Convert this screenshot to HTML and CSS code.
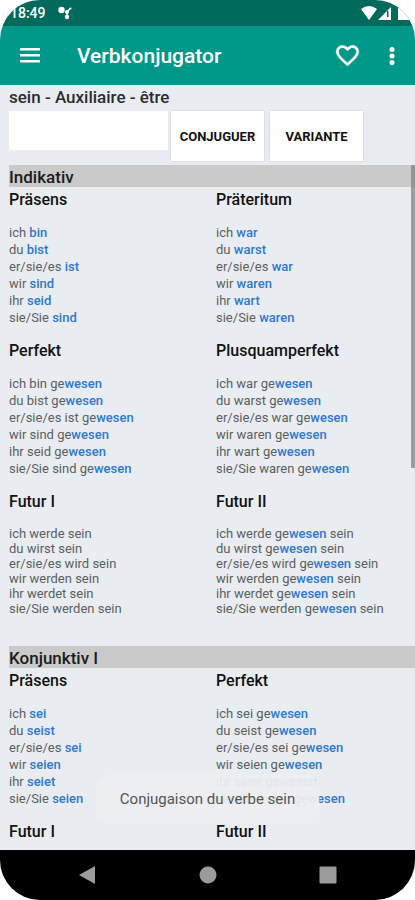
FILE: index.html
```html
<!DOCTYPE html>
<html lang="de">
<head>
    <meta charset="UTF-8">
    <meta name="viewport" content="width=device-width, initial-scale=1.0">
    <title>Verbkonjugator</title>
    <link rel="stylesheet" href="styles.css">
</head>
<body>
<div class="phone">
    <div class="status-bar">
        <span class="time">18:49</span>
        <svg class="notification" width="14" height="14" viewBox="0 0 14 14" fill="#fff">
            <circle cx="3.5" cy="4" r="3.2"/>
            <circle cx="9" cy="6" r="2"/>
            <circle cx="9" cy="11" r="2.2"/>
            <circle cx="12.5" cy="2.5" r="1"/>
            <path d="M8.2 6h1.6v5H8.2zM9 4.5l3-2.5v2l-2 2z"/>
        </svg>
        <svg class="signals" width="54" height="16" viewBox="0 0 54 16">
            <path d="M0 4Q8-2 16 4L8 15z" fill="#fff"/>
            <path d="M17 15L30 2v13z" fill="#fff"/>
            <path d="M26 6h1.5v6H26z" fill="#006b5d"/>
            <path d="M37 3h3V1h5v2h3v12H37z" fill="#fff"/>
        </svg>
    </div>

    <header>
        <button class="icon-button" aria-label="Menu">
            <svg width="20" height="15" viewBox="0 0 20 15" fill="#fff">
                <path d="M0 0h20v2.6H0zM0 6h20v2.6H0zM0 12h20v2.6H0z"/>
            </svg>
        </button>
        <h1>Verbkonjugator</h1>
        <button class="icon-button" aria-label="Favoris">
            <svg width="27" height="27" viewBox="0 0 24 24" fill="#fff" stroke="#fff" stroke-width="0.4">
                <path d="M16.5 3c-1.74 0-3.41.81-4.5 2.09C10.91 3.81 9.24 3 7.5 3 4.42 3 2 5.42 2 8.5c0 3.78 3.4 6.86 8.55 11.54L12 21.35l1.45-1.32C18.6 15.36 22 12.28 22 8.5 22 5.42 19.58 3 16.5 3zm-4.4 15.55l-.1.1-.1-.1C7.14 14.24 4 11.39 4 8.5 4 6.5 5.5 5 7.5 5c1.54 0 3.04.99 3.57 2.36h1.87C13.46 5.99 14.96 5 16.5 5c2 0 3.5 1.5 3.5 3.5 0 2.89-3.14 5.74-7.9 10.05z"/>
            </svg>
        </button>
        <button class="icon-button more" aria-label="Plus">
            <svg width="6" height="20" viewBox="0 0 6 20" fill="#fff">
                <circle cx="3" cy="3.5" r="2.5"/>
                <circle cx="3" cy="10" r="2.5"/>
                <circle cx="3" cy="16.5" r="2.5"/>
            </svg>
        </button>
    </header>

    <main>
        <h2 class="verb">sein - Auxiliaire - être</h2>
        <form class="search">
            <input type="text" aria-label="Verbe">
            <button type="button">CONJUGUER</button>
            <button type="button">VARIANTE</button>
        </form>

        <div class="results">
            <section>
                <h2 class="mood">Indikativ</h2>
                <div class="tenses">
                    <div class="tense">
                        <h3>Präsens</h3>
                        <p>ich <b>bin</b></p>
                        <p>du <b>bist</b></p>
                        <p>er/sie/es <b>ist</b></p>
                        <p>wir <b>sind</b></p>
                        <p>ihr <b>seid</b></p>
                        <p>sie/Sie <b>sind</b></p>
                    </div>
                    <div class="tense">
                        <h3>Präteritum</h3>
                        <p>ich <b>war</b></p>
                        <p>du <b>warst</b></p>
                        <p>er/sie/es <b>war</b></p>
                        <p>wir <b>waren</b></p>
                        <p>ihr <b>wart</b></p>
                        <p>sie/Sie <b>waren</b></p>
                    </div>
                    <div class="tense">
                        <h3>Perfekt</h3>
                        <p>ich bin ge<b>wesen</b></p>
                        <p>du bist ge<b>wesen</b></p>
                        <p>er/sie/es ist ge<b>wesen</b></p>
                        <p>wir sind ge<b>wesen</b></p>
                        <p>ihr seid ge<b>wesen</b></p>
                        <p>sie/Sie sind ge<b>wesen</b></p>
                    </div>
                    <div class="tense">
                        <h3>Plusquamperfekt</h3>
                        <p>ich war ge<b>wesen</b></p>
                        <p>du warst ge<b>wesen</b></p>
                        <p>er/sie/es war ge<b>wesen</b></p>
                        <p>wir waren ge<b>wesen</b></p>
                        <p>ihr wart ge<b>wesen</b></p>
                        <p>sie/Sie waren ge<b>wesen</b></p>
                    </div>
                    <div class="tense compact">
                        <h3>Futur I</h3>
                        <p>ich werde sein</p>
                        <p>du wirst sein</p>
                        <p>er/sie/es wird sein</p>
                        <p>wir werden sein</p>
                        <p>ihr werdet sein</p>
                        <p>sie/Sie werden sein</p>
                    </div>
                    <div class="tense compact">
                        <h3>Futur II</h3>
                        <p>ich werde ge<b>wesen</b> sein</p>
                        <p>du wirst ge<b>wesen</b> sein</p>
                        <p>er/sie/es wird ge<b>wesen</b> sein</p>
                        <p>wir werden ge<b>wesen</b> sein</p>
                        <p>ihr werdet ge<b>wesen</b> sein</p>
                        <p>sie/Sie werden ge<b>wesen</b> sein</p>
                    </div>
                </div>
            </section>

            <section>
                <h2 class="mood">Konjunktiv I</h2>
                <div class="tenses">
                    <div class="tense">
                        <h3>Präsens</h3>
                        <p>ich <b>sei</b></p>
                        <p>du <b>seist</b></p>
                        <p>er/sie/es <b>sei</b></p>
                        <p>wir <b>seien</b></p>
                        <p>ihr <b>seiet</b></p>
                        <p>sie/Sie <b>seien</b></p>
                    </div>
                    <div class="tense">
                        <h3>Perfekt</h3>
                        <p>ich sei ge<b>wesen</b></p>
                        <p>du seist ge<b>wesen</b></p>
                        <p>er/sie/es sei ge<b>wesen</b></p>
                        <p>wir seien ge<b>wesen</b></p>
                        <p>ihr seiet ge<b>wesen</b></p>
                        <p>sie/Sie seien ge<b>wesen</b></p>
                    </div>
                    <div class="tense">
                        <h3>Futur I</h3>
                    </div>
                    <div class="tense">
                        <h3>Futur II</h3>
                    </div>
                </div>
            </section>
            <div class="scrollbar"></div>
        </div>
        <div class="toast" role="status">Conjugaison du verbe sein</div>
    </main>

    <nav>
        <button aria-label="Retour">
            <svg width="18" height="18" viewBox="0 0 18 18" fill="#9b9b9b"><path d="M16 0v18L0 9z"/></svg>
        </button>
        <button aria-label="Accueil">
            <svg width="18" height="18" viewBox="0 0 18 18" fill="#9b9b9b"><circle cx="9" cy="9" r="8.5"/></svg>
        </button>
        <button aria-label="Applications">
            <svg width="18" height="18" viewBox="0 0 18 18" fill="#9b9b9b"><rect x="0.5" y="0.5" width="17" height="17" rx="1"/></svg>
        </button>
    </nav>
</div>
</body>
</html>
```

FILE: styles.css
```css
* {
    box-sizing: border-box;
}

body {
    margin: 0;
    background-color: #fff;
    font-family: Roboto, sans-serif;
}

h1, h2, h3, p {
    margin: 0;
}

button {
    border: none;
    padding: 0;
    font-family: inherit;
}

.phone {
    display: flex;
    flex-direction: column;
    height: 100vh;
    border-radius: 40px;
    overflow: hidden;
    background-color: #e9edf1;
}

.status-bar {
    display: flex;
    align-items: center;
    flex: none;
    height: 26px;
    padding-left: 10px;
    background-color: #006b5d;
    color: #fff;
    font-size: 14px;
    font-weight: 500;
}

.notification {
    margin-left: 12px;
}

.signals {
    margin-left: auto;
}

header {
    display: flex;
    align-items: center;
    flex: none;
    height: 59px;
    padding: 0 20px;
    background-color: #009888;
    color: #fff;
}

header h1 {
    flex: 1;
    margin-left: 37px;
    font-size: 21px;
    font-weight: 500;
}

.icon-button {
    display: flex;
    background: none;
}

.more {
    margin-left: 28px;
}

main {
    position: relative;
    display: flex;
    flex-direction: column;
    flex: 1;
    min-height: 0;
    padding-left: 9px;
}

.verb {
    font-size: 17px;
    font-weight: 500;
    line-height: 25px;
    color: #2a2c2e;
}

.search {
    display: flex;
    align-items: flex-start;
    gap: 6px;
    height: 55px;
    padding-top: 1px;
}

.search input {
    width: 159px;
    height: 39px;
    margin-right: -3px;
    border: none;
    background-color: #fff;
}

.search button {
    width: 93px;
    height: 50px;
    background-color: #fff;
    box-shadow: 0 0 2px #c4c8cc;
    color: #111;
    font-size: 13px;
    font-weight: 700;
}

.results {
    position: relative;
    flex: 1;
    min-height: 0;
    overflow: hidden;
}

.mood {
    margin-bottom: 1px;
    padding-top: 2px;
    background-color: #cacaca;
    font-size: 17px;
    font-weight: 500;
    line-height: 20px;
    color: #1b1b1b;
}

.tenses {
    display: grid;
    grid-template-columns: 207px 1fr;
    padding-bottom: 17px;
}

.tense {
    padding-bottom: 13px;
    font-size: 13px;
    line-height: 17px;
    color: #5b5e61;
}

.tense h3 {
    margin-bottom: 12px;
    font-size: 16px;
    font-weight: 500;
    line-height: 24px;
    color: #111;
}

.tense b {
    font-weight: 500;
    color: #2f78cf;
}

.compact {
    line-height: 15px;
}

.scrollbar {
    position: absolute;
    top: 0;
    right: 0;
    width: 4px;
    height: 303px;
    background-color: #85888a;
    opacity: 0.8;
}

.toast {
    position: absolute;
    left: 50%;
    bottom: 26px;
    transform: translateX(-50%);
    padding: 14px 24px;
    border-radius: 16px;
    background-color: rgba(236, 238, 240, 0.94);
    color: #555;
    font-size: 15px;
    line-height: 22px;
    white-space: nowrap;
}

nav {
    display: flex;
    justify-content: center;
    align-items: center;
    gap: 102px;
    flex: none;
    height: 50px;
    background-color: #000;
}

nav button {
    display: flex;
    background: none;
}
```
